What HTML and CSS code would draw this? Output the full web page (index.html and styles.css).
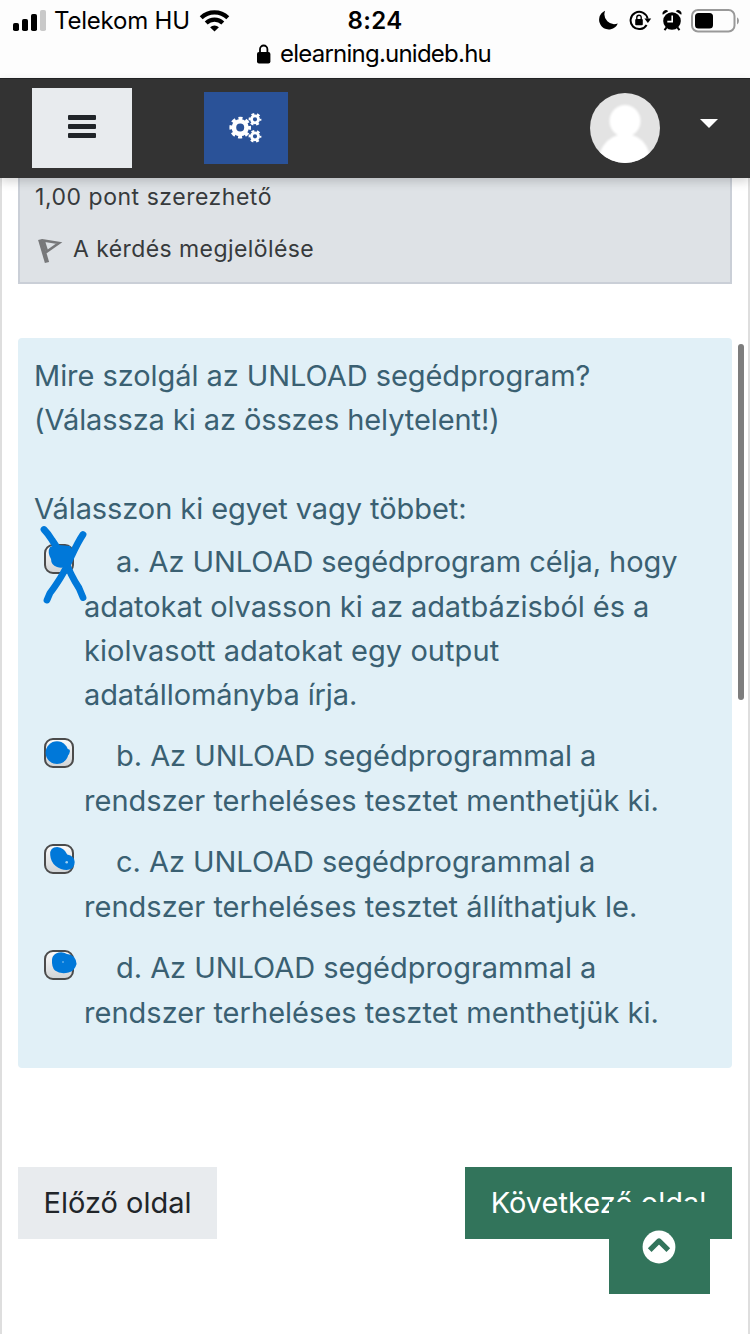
FILE: index.html
```html
<!DOCTYPE html>
<html lang="hu">
<head>
<meta charset="utf-8">
<title>elearning.unideb.hu</title>
<link rel="stylesheet" href="styles.css">
</head>
<body>
<div class="screen">
  <header class="browser">
    <div class="status">
      <div class="carrier">
        <svg class="signal" width="34" height="22" viewBox="0 0 34 22"><rect x="0" y="13" width="6" height="8" rx="1.8"/><rect x="9" y="9" width="6" height="12" rx="1.8"/><rect x="18" y="4" width="6" height="17" rx="1.8"/><rect x="27" y="0" width="6" height="21" rx="1.8" fill="#c9c9c9"/></svg>
        <span class="carrier-name">Telekom HU</span>
        <svg class="wifi" width="32" height="24" viewBox="0 0 32 24"><g fill="none" stroke="#000" stroke-width="4.2"><path d="M2.2 8.700a19.200 19.200 0 0 1 26.600 0"/><path d="M7.200 14a12 12 0 0 1 16.600 0"/></g><path d="M15.500 22.500l-4.400-4.300a6.400 6.400 0 0 1 8.800 0z"/></svg>
      </div>
      <span class="clock">8:24</span>
      <div class="indicators">
        <svg width="21" height="21" viewBox="0 0 21 21"><path d="M7.1.8A9.7 9.7 0 1 0 19.8 13.4 9.8 9.8 0 0 1 7.1.8z"/></svg>
        <svg width="23" height="21" viewBox="0 0 23 21"><path d="M17.6 14.9A8.6 8.6 0 1 1 18.6 8.6" fill="none" stroke="#000" stroke-width="2"/><path d="M15.4 8.4h6.8l-3.3 4.6z"/><rect x="6.2" y="9" width="7.6" height="6.3" rx="1"/><path d="M7.8 9.5V7.4a2.2 2.2 0 0 1 4.4 0v2.1" fill="none" stroke="#000" stroke-width="1.4"/></svg>
        <svg width="20" height="21" viewBox="0 0 20 21"><circle cx="10" cy="11" r="8.8"/><path d="M.8 4.8A3.3 3.3 0 0 1 6.2 1.2zM13.8 1.2a3.3 3.3 0 0 1 5.4 3.6z"/><path d="M4.4 17.6l-1.9 2.6M15.6 17.6l1.9 2.6" stroke="#000" stroke-width="2"/><path d="M10.2 5.6v6H5.3" fill="none" stroke="#fff" stroke-width="1.6"/></svg>
        <svg class="battery" width="49" height="24" viewBox="0 0 49 24"><rect x="1" y="1" width="42.5" height="21.5" rx="6" fill="none" stroke="#999" stroke-width="2"/><rect x="4" y="4" width="18" height="15.5" rx="3.5"/><path d="M46 8.2q2 1 2 3.6t-2 3.6z" fill="#999"/></svg>
      </div>
    </div>
    <div class="address">
      <svg width="14" height="20" viewBox="0 0 14 20"><rect x="0" y="8" width="13.4" height="11.4" rx="2"/><path d="M3 9V5.2a3.7 3.7 0 0 1 7.4 0V9" fill="none" stroke="#000" stroke-width="1.8"/></svg>
      <span class="host">elearning.unideb.hu</span>
    </div>
  </header>

  <nav class="navbar">
    <button class="menu" aria-label="Menu"><span class="bar"></span><span class="bar"></span><span class="bar"></span></button>
    <button class="settings" aria-label="Settings">
      <svg width="34" height="32" viewBox="0 0 34 32" fill="none" stroke="#fff">
        <circle cx="11.2" cy="15.6" r="6.3" stroke-width="4.6"/>
        <circle cx="11.2" cy="15.6" r="9.2" stroke-width="3.2" stroke-dasharray="4 3.226" stroke-dashoffset="2"/>
        <circle cx="26" cy="7.3" r="3.5" stroke-width="2.8"/>
        <circle cx="26" cy="7.3" r="5.3" stroke-width="2.2" stroke-dasharray="2.8 2.75" stroke-dashoffset="1.4"/>
        <circle cx="26" cy="24.3" r="3.5" stroke-width="2.8"/>
        <circle cx="26" cy="24.3" r="5.3" stroke-width="2.2" stroke-dasharray="2.8 2.75" stroke-dashoffset="1.4"/>
      </svg>
    </button>
    <div class="account">
      <svg class="avatar" width="70" height="70" viewBox="0 0 70 70">
        <defs><clipPath id="round"><circle cx="35" cy="35" r="35"/></clipPath></defs>
        <g clip-path="url(#round)"><path fill="#e3e3e3" d="M0 0h70v70H0z"/><g class="person"><ellipse cx="35" cy="28" rx="15.5" ry="16"/><path d="M28 38h14v4q12 3 17 17v14H10V59q6-14 18-17z"/></g></g>
      </svg>
      <svg width="18" height="9" viewBox="0 0 18 9"><path d="M0 0h18L9 9z" fill="#fff"/></svg>
    </div>
  </nav>

  <main class="page">
    <section class="info">
      <div class="points">1,00 pont szerezhető</div>
      <div class="flag">
        <svg width="26" height="28" viewBox="0 0 26 28"><g class="flag-shape" fill="none" stroke="#77787a"><path d="M3.2 1.500l6.800 23" stroke-width="4.400"/><path d="M6.500 2.500l15.500 2.500-12 8.500z" stroke-width="2.600"/></g></svg>
        <span class="flag-text">A kérdés megjelölése</span>
      </div>
    </section>

    <section class="question">
      <p class="prompt"><span class="line q1">Mire szolgál az UNLOAD segédprogram?</span><span class="line q2">(Válassza ki az összes helytelent!)</span></p>
      <p class="choose"><span class="line q3">Válasszon ki egyet vagy többet:</span></p>
      <div class="answers">
        <div class="answer">
          <div class="check"><svg class="ink" width="60" height="90" viewBox="0 0 60 90"><g fill="none" stroke="#0078d9" stroke-width="6.8" stroke-linecap="round" stroke-linejoin="round"><path d="M12 11.500q4 4 8 10.500L32 40l7 16q4 8 8 14l4 9.500M51 16.500Q46 24 40 37 34 51 28 60.500T18 75l-3 7"/></g><path fill="#0078d9" d="M18 29q4-2 9-2l11 1 4 10-4 9q-7 4-13 2-6-2-6-8-4-7-1-12z"/></svg></div>
          <p class="text"><span class="line first a1">a. Az UNLOAD segédprogram célja, hogy</span><span class="line a2">adatokat olvasson ki az adatbázisból és a</span><span class="line a3">kiolvasott adatokat egy output</span><span class="line a4">adatállományba írja.</span></p>
        </div>
        <div class="answer">
          <div class="check"><svg class="ink" width="60" height="90" viewBox="0 0 60 90"><ellipse cx="25" cy="40.700" rx="11.400" ry="11.400" fill="#0078d9"/><path fill="#0078d9" d="M31 31.500l3.500 5.500q3.500-.5 3.500 2t-3 5.500l-4 6z"/></svg></div>
          <p class="text"><span class="line first b1">b. Az UNLOAD segédprogrammal a</span><span class="line b2">rendszer terheléses tesztet menthetjük ki.</span></p>
        </div>
        <div class="answer">
          <div class="check"><svg class="ink" width="60" height="90" viewBox="0 0 60 90"><path fill="#0078d9" d="M18.200 37q-.5-8 7-8 7 .5 10 7.500 7.500 1.500 7.500 7.500 0 7.500-8 8-6 0-11-4-5-4-5.500-11z"/><circle cx="34.700" cy="44.300" r="1.3" fill="#9ed0f2"/></svg></div>
          <p class="text"><span class="line first c1">c. Az UNLOAD segédprogrammal a</span><span class="line c2">rendszer terheléses tesztet állíthatjuk le.</span></p>
        </div>
        <div class="answer">
          <div class="check"><svg class="ink" width="60" height="90" viewBox="0 0 60 90"><path fill="#0078d9" d="M20 36q0-4.500 4-6.500 6-2.500 11 .5 4 0 7 3 2.500 3 2.600 7-2 7-8 8.500-8 2-13.600-2-3.500-3.500-3-10.500z"/><circle cx="31" cy="38" r=".8" fill="#9ed0f2"/></svg></div>
          <p class="text"><span class="line first d1">d. Az UNLOAD segédprogrammal a</span><span class="line d2">rendszer terheléses tesztet menthetjük ki.</span></p>
        </div>
      </div>
    </section>

    <div class="pager">
      <button class="btn prev"><span class="prev-text">Előző oldal</span></button>
      <button class="btn next"><span class="next-text">Következő oldal</span></button>
    </div>
  </main>

  <div class="scrollbar"></div>
  <button class="to-top" aria-label="Top"><svg width="34" height="34" viewBox="0 0 34 34"><circle cx="17" cy="17" r="16.4" fill="#fff"/><path d="M7.7 20.2L17 10.9l9.3 9.3" fill="none" stroke="#32745b" stroke-width="5.2" stroke-linejoin="round"/></svg></button>
</div>
</body>
</html>
```
FILE: styles.css
```css
* { box-sizing: border-box; }
body { margin: 0; font-family: Inter, "Liberation Sans", sans-serif; background: #fff; }
button { border: 0; padding: 0; margin: 0; font: inherit; }
p { margin: 0; }
svg { display: block; flex: none; }
.screen { position: relative; width: 750px; height: 1334px; overflow: hidden; display: flex; flex-direction: column; }

.browser { height: 78px; background: #fdfdfd; flex: none; }
.status { height: 40px; display: grid; grid-template-columns: 1fr auto 1fr; padding: 0 10px 0 13px; color: #000; }
.carrier { display: flex; align-items: center; }
.carrier-name { font-size: 24px; margin-left: 7px; width: 138px; white-space: nowrap; letter-spacing: -.2px; }
.wifi { margin-left: 7px; }
.clock { font-size: 24px; line-height: 41px; font-weight: 600; letter-spacing: .4px; margin-right: 3px; }
.indicators { display: flex; align-items: center; justify-content: flex-end; gap: 10px; }
.battery { margin-left: -1px; }
.address { display: flex; align-items: center; justify-content: center; gap: 9px; height: 27px; padding-right: 2px; }
.host { font-size: 24px; letter-spacing: -.77px; }

.navbar { position: relative; z-index: 2; height: 100px; flex: none; display: flex; align-items: center; padding: 0 32px; background: #333; border-top: 1px solid #212224; box-shadow: 0 4px 9px rgba(0, 0, 0, .16); }
.menu { width: 100px; height: 80px; margin-bottom: 1px; padding-bottom: 3px; background: #e8ebee; display: flex; flex-direction: column; align-items: center; justify-content: center; gap: 4px; }
.bar { width: 28px; height: 5px; border-radius: 1px; background: #212529; }
.settings { width: 84px; height: 72px; margin: 0 0 1px 72px; padding: 0 0 1px; background: #2a5298; display: grid; place-items: center; }
.account { margin-left: auto; margin-bottom: 1px; display: flex; gap: 40px; align-items: center; }
.account svg:last-child { margin-bottom: 9px; }
.person { fill: #fff; filter: blur(1px); }

.page { flex: 1; padding: 0 16px; border: 2px solid #dedede; border-width: 0 2px; }
.info { height: 106px; padding: 0 15px; background: #dee2e6; border: 2px solid #cacfd7; border-top: 0; color: #373a3c; font-size: 23px; }
.points { height: 38px; line-height: 38px; letter-spacing: .53px; }
.flag { display: flex; align-items: center; gap: 11px; padding: 14px 0 0 2px; height: 52px; white-space: nowrap; }
.flag svg { margin-top: 5px; }
.flag-shape { filter: blur(.6px); }
.flag-text { letter-spacing: .42px; margin-left: -1px; }

.question { margin-top: 54px; height: 730px; padding: 16px; border-radius: 4px; background: #e1f0f7; color: #3a6072; font-size: 29px; line-height: 44.4px; }
.line { display: block; white-space: nowrap; width: max-content; }
.q1 { letter-spacing: -.06px; }
.q2 { letter-spacing: -.09px; }
.q3 { letter-spacing: -.07px; }
.a1, .a2 { letter-spacing: -.07px; }
.a3 { letter-spacing: .06px; }
.a4 { letter-spacing: -.09px; }
.b1, .c1, .d1 { letter-spacing: -.04px; }
.b2, .c2, .d2 { letter-spacing: .03px; }
.choose { margin-top: 44.4px; }
.answers { display: grid; gap: 17px; padding: 8.4px 0 0 10px; line-height: 44px; }
.answer { display: grid; grid-template-columns: 40px 1fr; }
.first { margin: 0 0 1px 32px; }
.check { position: relative; width: 30px; height: 30px; margin-top: 4px; border: 2px solid #4b4b4b; border-radius: 9px; background: linear-gradient(#fafafa, #d2d5d7); }
.ink { position: absolute; left: -14px; top: -28px; }

.pager { display: flex; justify-content: space-between; margin-top: 99px; }
.btn { height: 72px; padding-bottom: 2px; font-size: 29px; white-space: nowrap; }
.prev { width: 199px; background: #e8ebee; color: #212529; }
.next { width: 267px; background: #32745b; color: #fff; }

.scrollbar { position: absolute; left: 738px; top: 344px; width: 6px; height: 356px; border-radius: 3px; background: #7d7d7d; }
.to-top { position: absolute; left: 609px; top: 1202px; width: 101px; height: 92px; padding: 0 1px 3px 0; background: #32745b; display: grid; place-items: center; }
```
